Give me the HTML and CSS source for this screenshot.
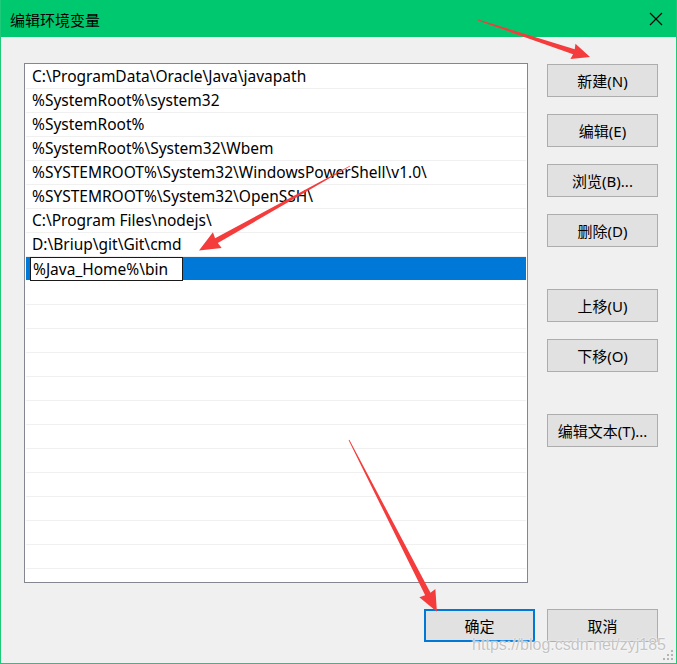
FILE: index.html
```html
<!DOCTYPE html>
<html lang="zh-CN">
<head>
<meta charset="utf-8">
<title>编辑环境变量</title>
<link rel="stylesheet" href="styles.css">
</head>
<body>
<div class="window">
  <div class="titlebar">
    <span class="title">编辑环境变量</span>
    <svg class="close" width="14" height="14" viewBox="0 0 14 14"><path d="M1 1 L13 13 M13 1 L1 13" stroke="#000" stroke-width="1.1" fill="none"/></svg>
  </div>
  <div class="content">
    <div class="list">
      <div class="row">C:\ProgramData\Oracle\Java\javapath</div>
      <div class="row">%SystemRoot%\system32</div>
      <div class="row">%SystemRoot%</div>
      <div class="row">%SystemRoot%\System32\Wbem</div>
      <div class="row">%SYSTEMROOT%\System32\WindowsPowerShell\v1.0\</div>
      <div class="row">%SYSTEMROOT%\System32\OpenSSH\</div>
      <div class="row">C:\Program Files\nodejs\</div>
      <div class="row">D:\Briup\git\Git\cmd</div>
      <div class="row selected"><div class="edit">%Java_Home%\bin</div></div>
      <div class="row"></div>
      <div class="row"></div>
      <div class="row"></div>
      <div class="row"></div>
      <div class="row"></div>
      <div class="row"></div>
      <div class="row"></div>
      <div class="row"></div>
      <div class="row"></div>
      <div class="row"></div>
      <div class="row"></div>
      <div class="row"></div>
    </div>
    <div class="buttons">
      <div class="btn">新建(N)</div>
      <div class="btn">编辑(E)</div>
      <div class="btn">浏览(B)...</div>
      <div class="btn">删除(D)</div>
      <div class="btn spaced">上移(U)</div>
      <div class="btn">下移(O)</div>
      <div class="btn spaced">编辑文本(T)...</div>
    </div>
  </div>
  <div class="footer">
    <div class="btn primary">确定</div>
    <div class="btn">取消</div>
  </div>
  <div class="watermark">https://blog.csdn.net/zyj185</div>
  <svg class="grip" width="12" height="12" viewBox="0 0 12 12" fill="#b4b4b4">
    <rect x="9" y="1" width="2" height="2"/>
    <rect x="5" y="5" width="2" height="2"/><rect x="9" y="5" width="2" height="2"/>
    <rect x="1" y="9" width="2" height="2"/><rect x="5" y="9" width="2" height="2"/><rect x="9" y="9" width="2" height="2"/>
  </svg>
  <svg class="arrows" width="677" height="664" viewBox="0 0 677 664">
    <g fill="#f43c3c">
      <g transform="translate(478 20) rotate(18.3)">
        <polygon points="0,-0.5 101,-2.6 100,-8 118,0 100,8 101,2.6 0,0.5"/>
      </g>
      <g transform="translate(350 166) rotate(150.8)">
        <polygon points="0,-0.3 153,-2.8 152,-9 173,0 152,9 153,2.8 0,0.3"/>
      </g>
      <g transform="translate(349 440) rotate(62.9)">
        <polygon points="0,-0.4 173,-3 172,-9 193,0 172,9 173,3 0,0.4"/>
      </g>
    </g>
  </svg>
</div>
</body>
</html>
```
FILE: styles.css
```css
html, body {
  margin: 0;
  padding: 0;
}
body {
  width: 677px;
  height: 664px;
  overflow: hidden;
  font-family: "Noto Sans", "Noto Sans CJK SC", sans-serif;
  font-size: 15px;
  color: #000;
}
.window {
  position: relative;
  box-sizing: border-box;
  width: 677px;
  height: 664px;
  border: 1px solid #1fc97a;
  border-top: none;
  background: #f0f0f0;
  display: flex;
  flex-direction: column;
}
.titlebar {
  height: 37px;
  flex: none;
  background: #00c86e;
  display: flex;
  align-items: center;
  justify-content: space-between;
  padding: 0 13px 0 9px;
}
.title {
  font-family: "Noto Sans CJK SC", sans-serif;
  font-size: 15px;
  line-height: 1;
  margin-top: 1px;
}
.close {
  display: block;
  margin-top: 1px;
}
.content {
  display: flex;
  padding: 26px 0 0 23px;
}
.list {
  box-sizing: border-box;
  width: 504px;
  height: 520px;
  border: 1px solid #828790;
  background: #fff;
  padding: 1px;
  overflow: hidden;
  flex: none;
}
.row {
  box-sizing: border-box;
  height: 24px;
  border-bottom: 1px solid #f0f0f0;
  padding-left: 6px;
  line-height: 23px;
  font-size: 15.5px;
  white-space: nowrap;
}
.row.selected {
  background: #0078d7;
  padding-left: 4px;
  border-bottom-color: #fff;
}
.edit {
  box-sizing: border-box;
  width: 153px;
  height: 24px;
  border: 1px solid #1a1a1a;
  background: #fff;
  padding-left: 2px;
  line-height: 22px;
}
.buttons {
  display: flex;
  flex-direction: column;
  gap: 17px;
  margin-left: 19px;
  margin-top: 1px;
}
.btn {
  box-sizing: border-box;
  width: 111px;
  height: 33px;
  background: #e1e1e1;
  border: 1px solid #adadad;
  display: flex;
  align-items: center;
  justify-content: center;
  font-family: "Noto Sans", "Noto Sans CJK SC", sans-serif;
  font-size: 15px;
  white-space: nowrap;
}
.btn.spaced {
  margin-top: 25px;
}
.footer {
  display: flex;
  justify-content: flex-end;
  gap: 12px;
  padding-right: 18px;
  margin-top: 26px;
}
.btn.primary {
  border: 2px solid #0078d7;
}
.watermark {
  position: absolute;
  right: 10px;
  bottom: 9px;
  font-family: "Liberation Sans", sans-serif;
  font-size: 16px;
  color: #c4c4c4;
  text-shadow: 0 0 1px #fff, 0 0 2px #fff;
}
.grip {
  position: absolute;
  right: 2px;
  bottom: 2px;
}
.arrows {
  position: absolute;
  left: -1px;
  top: 0;
  pointer-events: none;
}
```
